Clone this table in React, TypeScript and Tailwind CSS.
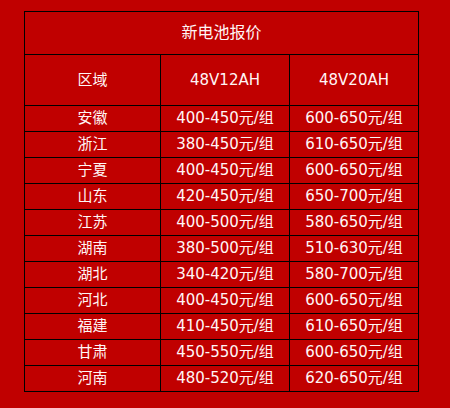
import React from 'react';

interface PriceRow {
  region: string;
  v12: string;
  v20: string;
}

const rows: PriceRow[] = [
  { region: '安徽', v12: '400-450元/组', v20: '600-650元/组' },
  { region: '浙江', v12: '380-450元/组', v20: '610-650元/组' },
  { region: '宁夏', v12: '400-450元/组', v20: '600-650元/组' },
  { region: '山东', v12: '420-450元/组', v20: '650-700元/组' },
  { region: '江苏', v12: '400-500元/组', v20: '580-650元/组' },
  { region: '湖南', v12: '380-500元/组', v20: '510-630元/组' },
  { region: '湖北', v12: '340-420元/组', v20: '580-700元/组' },
  { region: '河北', v12: '400-450元/组', v20: '600-650元/组' },
  { region: '福建', v12: '410-450元/组', v20: '610-650元/组' },
  { region: '甘肃', v12: '450-550元/组', v20: '600-650元/组' },
  { region: '河南', v12: '480-520元/组', v20: '620-650元/组' },
];

const App: React.FC = () => {
  return (
    <div
      className="w-[450px] h-[408px] bg-[#c00000] pt-[11px] pl-[24px] text-[#fff5f5] text-[15px]"
      style={{ fontFamily: '"DejaVu Sans", "Noto Sans CJK SC", sans-serif' }}
    >
      <table className="border-collapse border border-black table-fixed w-[394px]">
        <colgroup>
          <col className="w-[136px]" />
          <col className="w-[129px]" />
          <col className="w-[129px]" />
        </colgroup>
        <tbody>
          <tr className="h-[43px]">
            <td colSpan={3} className="border border-black text-center text-[16px]">新电池报价</td>
          </tr>
          <tr className="h-[51px]">
            <td className="border border-black text-center">区域</td>
            <td className="border border-black text-center">48V12AH</td>
            <td className="border border-black text-center">48V20AH</td>
          </tr>
          {rows.map((r) => (
            <tr key={r.region} className="h-[26px]">
              <td className="border border-black text-center p-0">{r.region}</td>
              <td className="border border-black text-center p-0">{r.v12}</td>
              <td className="border border-black text-center p-0">{r.v20}</td>
            </tr>
          ))}
        </tbody>
      </table>
    </div>
  );
};

export default App;
